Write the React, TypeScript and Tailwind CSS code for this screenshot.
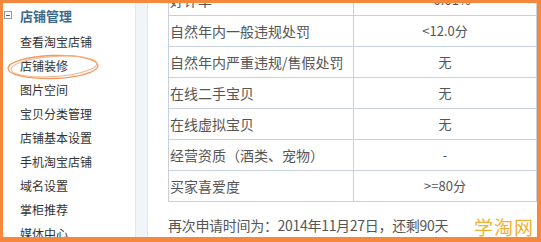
import React from 'react';

const menu = [
  '查看淘宝店铺',
  '店铺装修',
  '图片空间',
  '宝贝分类管理',
  '店铺基本设置',
  '手机淘宝店铺',
  '域名设置',
  '掌柜推荐',
  '媒体中心',
];

const rows = [
  { name: '好评率', value: '<=0.01%' },
  { name: '自然年内一般违规处罚', value: '<12.0分' },
  { name: '自然年内严重违规/售假处罚', value: '无' },
  { name: '在线二手宝贝', value: '无' },
  { name: '在线虚拟宝贝', value: '无' },
  { name: '经营资质（酒类、宠物）', value: '-' },
  { name: '买家喜爱度', value: '>=80分' },
];

const font = { fontFamily: '"Noto Sans CJK SC", "Liberation Sans", sans-serif' };

const App = () => {
  return (
    <div
      className="relative w-[541px] h-[242px] overflow-hidden bg-white border-t-[3px] border-l-[3px] border-r-[4px] border-b-[5px] border-[#f5883c] flex"
      style={font}
    >
      {/* sidebar */}
      <div className="w-[132px] shrink-0">
        <div className="h-[24px] flex items-center pl-[1px]">
          <span className="w-[8px] h-[8px] border border-[#8a9aa8] flex items-center justify-center">
            <span className="w-[4px] h-px bg-[#55687a]"></span>
          </span>
          <span className="ml-[8px] text-[13px] font-bold text-[#3d6a8c] leading-none">店铺管理</span>
        </div>
        <ul className="mt-[3px]">
          {menu.map((m) => (
            <li key={m} className="h-[24px] flex items-center pl-[17px] text-[12px] text-[#333] leading-none">
              {m}
            </li>
          ))}
        </ul>
      </div>

      {/* splitter */}
      <div className="w-[13px] shrink-0 border-l border-r border-[#dfe6ee] bg-[#f1f5fa]"></div>

      {/* content */}
      <div className="flex-1 pl-[20px]">
        <div className="w-[369px] -mt-[18px] border-l border-r border-[#c6d1dd] text-[14px] text-[#555]">
          {rows.map((r) => (
            <div key={r.name} className="grid grid-cols-[185px_1fr] h-[31px] border-b border-[#c6d1dd]">
              <div className="flex items-center pl-[1px] border-r border-[#c6d1dd] whitespace-nowrap">{r.name}</div>
              <div className="flex items-center justify-center text-[13px]">{r.value}</div>
            </div>
          ))}
        </div>
        <div className="mt-[13px] text-[14px] tracking-[-0.3px] text-[#555] whitespace-nowrap">
          再次申请时间为：2014年11月27日，还剩90天
        </div>
      </div>

      {/* watermark */}
      <span className="absolute right-[3px] bottom-[1px] text-[19px] text-[#f0b12e] tracking-[1px] leading-none">学淘网</span>

      {/* hand-drawn circle around 店铺装修 */}
      <svg className="absolute left-[2px] top-[49px] pointer-events-none" width="98" height="30" viewBox="0 0 98 30">
        <ellipse cx="48" cy="15" rx="45" ry="11.5" fill="none" stroke="#ef9a62" strokeWidth="1.3" transform="rotate(-2 48 15)" />
        <ellipse cx="49" cy="14.5" rx="43" ry="10" fill="none" stroke="#f3b48a" strokeWidth="1" transform="rotate(-4 49 14.5)" />
      </svg>
    </div>
  );
};

export default App;
